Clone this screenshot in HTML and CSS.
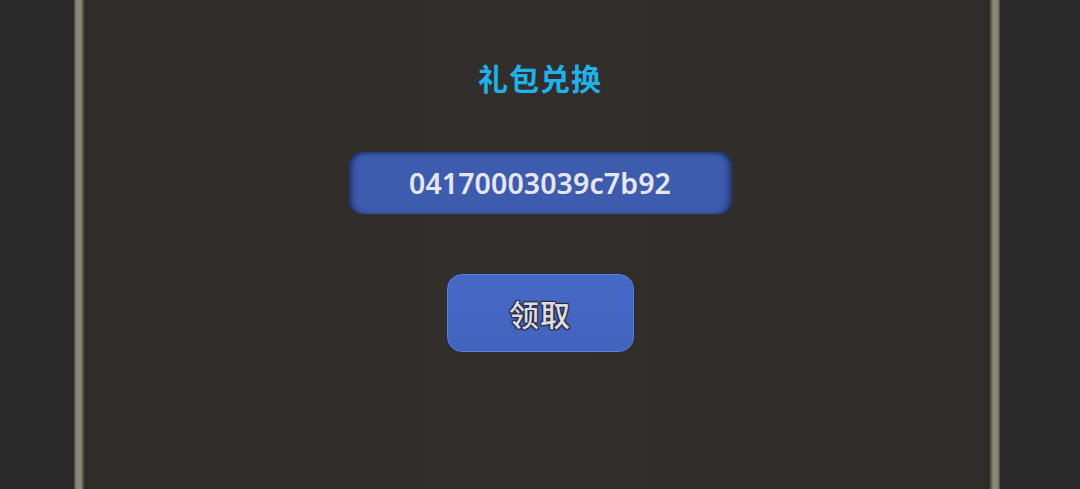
FILE: index.html
```html
<!DOCTYPE html>
<html lang="zh">
<head>
<meta charset="utf-8">
<link rel="stylesheet" href="styles.css">
</head>
<body>
<div class="stage">
  <div class="panel">
    <div class="content">
      <h1 class="title">礼包兑换</h1>
      <div class="code-field">04170003039c7b92</div>
      <button class="claim">领取</button>
    </div>
  </div>
</div>
</body>
</html>
```

FILE: styles.css
```css
html, body {
  margin: 0;
  padding: 0;
  width: 1080px;
  height: 489px;
  overflow: hidden;
  background: #2a2a2a;
}
.stage {
  width: 1080px;
  height: 489px;
  display: flex;
  justify-content: center;
}
.panel {
  width: 926px;
  height: 489px;
  margin-left: -6px;
  box-sizing: border-box;
  background:
    linear-gradient(to right,
      #3a3833 0px, #6e6a60 1px, #8d887b 3px, #8a8578 7px, #5a564d 9px, #2c2925 11px, #302c29 16px,
      #322e2b 50%,
      #302c29 calc(100% - 16px), #2c2925 calc(100% - 11px), #5a564d calc(100% - 9px), #8a8578 calc(100% - 7px), #8d887b calc(100% - 3px), #6e6a60 calc(100% - 1px), #3a3833 100%);
  padding: 0 11px;
}
.content {
  display: flex;
  flex-direction: column;
  align-items: center;
  font-family: "Noto Sans CJK SC", "Noto Sans", sans-serif;
  margin-left: 6px;
}
.title {
  margin: 56px 0 0 0;
  font-size: 30px;
  line-height: 42px;
  font-weight: 700;
  color: #1fb2ea;
  letter-spacing: 1px;
}
.code-field {
  margin-top: 54px;
  width: 383px;
  height: 62px;
  box-sizing: border-box;
  border-radius: 14px;
  background: #3d5cae;
  box-shadow: inset 6px 0 6px -3px rgba(15, 25, 60, 0.6), inset -6px 0 6px -3px rgba(15, 25, 60, 0.6), inset 0 2px 3px rgba(15, 25, 60, 0.35), 0 0 2px rgba(40,60,130,0.6);
  display: flex;
  align-items: center;
  justify-content: center;
  color: #e6e6ee;
  font-family: "Noto Sans", sans-serif;
  font-size: 28.5px;
  font-weight: 600;
  letter-spacing: 0.1px;
}
.claim {
  margin-top: 60px;
  width: 187px;
  height: 78px;
  border-radius: 15px;
  border: 1px solid #5b7fd8;
  background: linear-gradient(#4769c6, #4262bd);
  box-shadow: 0 0 2px rgba(30,45,100,0.7);
  color: #dcdce4;
  font-family: "Noto Sans CJK SC", sans-serif;
  font-size: 30px;
  font-weight: 500;
  letter-spacing: 1px;
  text-shadow: 0 0 1px #2a2a3a, 1px 1px 1px #2a2a3a, -1px -1px 1px #2a2a3a, 1px -1px 1px #2a2a3a, -1px 1px 1px #2a2a3a;
  padding: 0;
}
```
